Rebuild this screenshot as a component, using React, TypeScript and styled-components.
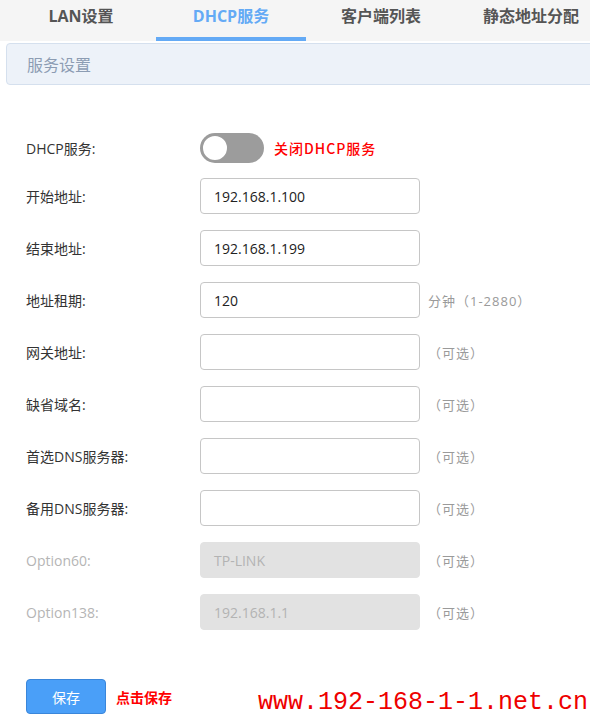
import React from "react";
import styled, { createGlobalStyle } from "styled-components";

const GlobalStyle = createGlobalStyle`
  html, body {
    margin: 0;
    padding: 0;
    background: #ffffff;
  }
  body {
    font-family: "Open Sans", "Noto Sans CJK SC", sans-serif;
    overflow: hidden;
  }
`;

type Field = {
  label: string;
  value: string;
  hint?: string;
  disabled?: boolean;
};

const tabs = ["LAN设置", "DHCP服务", "客户端列表", "静态地址分配"];

const fields: Field[] = [
  { label: "开始地址:", value: "192.168.1.100" },
  { label: "结束地址:", value: "192.168.1.199" },
  { label: "地址租期:", value: "120", hint: "分钟（1-2880）" },
  { label: "网关地址:", value: "", hint: "（可选）" },
  { label: "缺省域名:", value: "", hint: "（可选）" },
  { label: "首选DNS服务器:", value: "", hint: "（可选）" },
  { label: "备用DNS服务器:", value: "", hint: "（可选）" },
  { label: "Option60:", value: "TP-LINK", hint: "（可选）", disabled: true },
  { label: "Option138:", value: "192.168.1.1", hint: "（可选）", disabled: true },
];

const App = () => {
  return (
    <Page>
      <GlobalStyle />
      <TabBar>
        {tabs.map((t, i) => (
          <Tab key={t} $active={i === 1}>
            {t}
          </Tab>
        ))}
      </TabBar>
      <Content>
        <SectionHead>服务设置</SectionHead>
        <Form>
          <SwitchRow>
            <Label>DHCP服务:</Label>
            <Toggle>
              <Knob />
            </Toggle>
            <RedNote>关闭DHCP服务</RedNote>
          </SwitchRow>
          {fields.map((f) => (
            <Row key={f.label}>
              <Label $muted={f.disabled}>{f.label}</Label>
              <Input $disabled={f.disabled}>{f.value}</Input>
              {f.hint && <Hint>{f.hint}</Hint>}
            </Row>
          ))}
        </Form>
        <Footer>
          <SaveButton>保存</SaveButton>
          <RedNote $bold>点击保存</RedNote>
          <Watermark>www.192-168-1-1.net.cn</Watermark>
        </Footer>
      </Content>
    </Page>
  );
};

const Page = styled.div`
  width: 590px;
  height: 720px;
  overflow: hidden;
  background: #fff;
`;

const TabBar = styled.div`
  display: flex;
  height: 41px;
  padding-left: 6px;
  background: #f5f5f5;
`;

const Tab = styled.div<{ $active?: boolean }>`
  flex: 0 0 150px;
  height: 41px;
  box-sizing: border-box;
  display: flex;
  align-items: center;
  justify-content: center;
  padding-bottom: 8px;
  font-size: 16px;
  font-weight: bold;
  color: ${(p) => (p.$active ? "#64aaf5" : "#555")};
  border-bottom: 4px solid ${(p) => (p.$active ? "#64aaf5" : "transparent")};
`;

const Content = styled.div`
  padding-left: 6px;
`;

const SectionHead = styled.div`
  margin-top: 2px;
  margin-right: -10px;
  height: 42px;
  box-sizing: border-box;
  display: flex;
  align-items: center;
  padding-left: 20px;
  background: #edf2f9;
  border: 1px solid #d5e0ee;
  border-radius: 4px;
  font-family: "Noto Sans CJK SC", sans-serif;
  font-size: 16px;
  color: #8c9cb3;
`;

const Form = styled.div`
  display: flex;
  flex-direction: column;
  gap: 16px;
  margin-top: 48px;
  padding-left: 20px;
`;

const Row = styled.div`
  display: flex;
  align-items: center;
  height: 36px;
`;

const SwitchRow = styled(Row)`
  height: 30px;
  margin-bottom: -1px;
`;

const Label = styled.div<{ $muted?: boolean }>`
  width: 174px;
  font-size: 14px;
  color: ${(p) => (p.$muted ? "#b5b5b5" : "#333")};
`;

const Toggle = styled.div`
  width: 64px;
  height: 30px;
  box-sizing: border-box;
  border-radius: 15px;
  background: #9c9c9c;
  display: flex;
  align-items: center;
  padding-left: 1px;
`;

const Knob = styled.div`
  width: 28px;
  height: 28px;
  box-sizing: border-box;
  border-radius: 50%;
  background: #fff;
  border: 2px solid #9c9c9c;
`;

const RedNote = styled.span<{ $bold?: boolean }>`
  margin-left: 10px;
  font-family: "Noto Sans CJK SC", sans-serif;
  font-size: 14px;
  font-weight: ${(p) => (p.$bold ? "bold" : 500)};
  letter-spacing: ${(p) => (p.$bold ? "0" : "1px")};
  color: #ff0000;
`;

const Input = styled.div<{ $disabled?: boolean }>`
  width: 220px;
  height: 36px;
  box-sizing: border-box;
  display: flex;
  align-items: center;
  padding-left: 13px;
  border-radius: 4px;
  border: 1px solid ${(p) => (p.$disabled ? "#e2e2e2" : "#c6c6c6")};
  background: ${(p) => (p.$disabled ? "#e2e2e2" : "#fff")};
  font-size: 14px;
  color: ${(p) => (p.$disabled ? "#b3b3b3" : "#222")};
`;

const Hint = styled.span`
  margin-left: 8px;
  font-size: 13px;
  letter-spacing: 1px;
  color: #9a9a9a;
`;

const Footer = styled.div`
  display: flex;
  align-items: center;
  margin-top: 48px;
  padding-left: 20px;
`;

const SaveButton = styled.div`
  width: 80px;
  height: 35px;
  box-sizing: border-box;
  display: flex;
  align-items: center;
  justify-content: center;
  border-radius: 4px;
  border: 1px solid #3a86da;
  background: #4a9ff8;
  color: #fff;
  font-family: "Noto Sans CJK SC", sans-serif;
  font-size: 14px;
`;

const Watermark = styled.span`
  margin-left: auto;
  margin-right: 2px;
  margin-top: 12px;
  font-family: "Liberation Mono", monospace;
  font-size: 25px;
  line-height: 1;
  color: #ee0000;
`;

export default App;
